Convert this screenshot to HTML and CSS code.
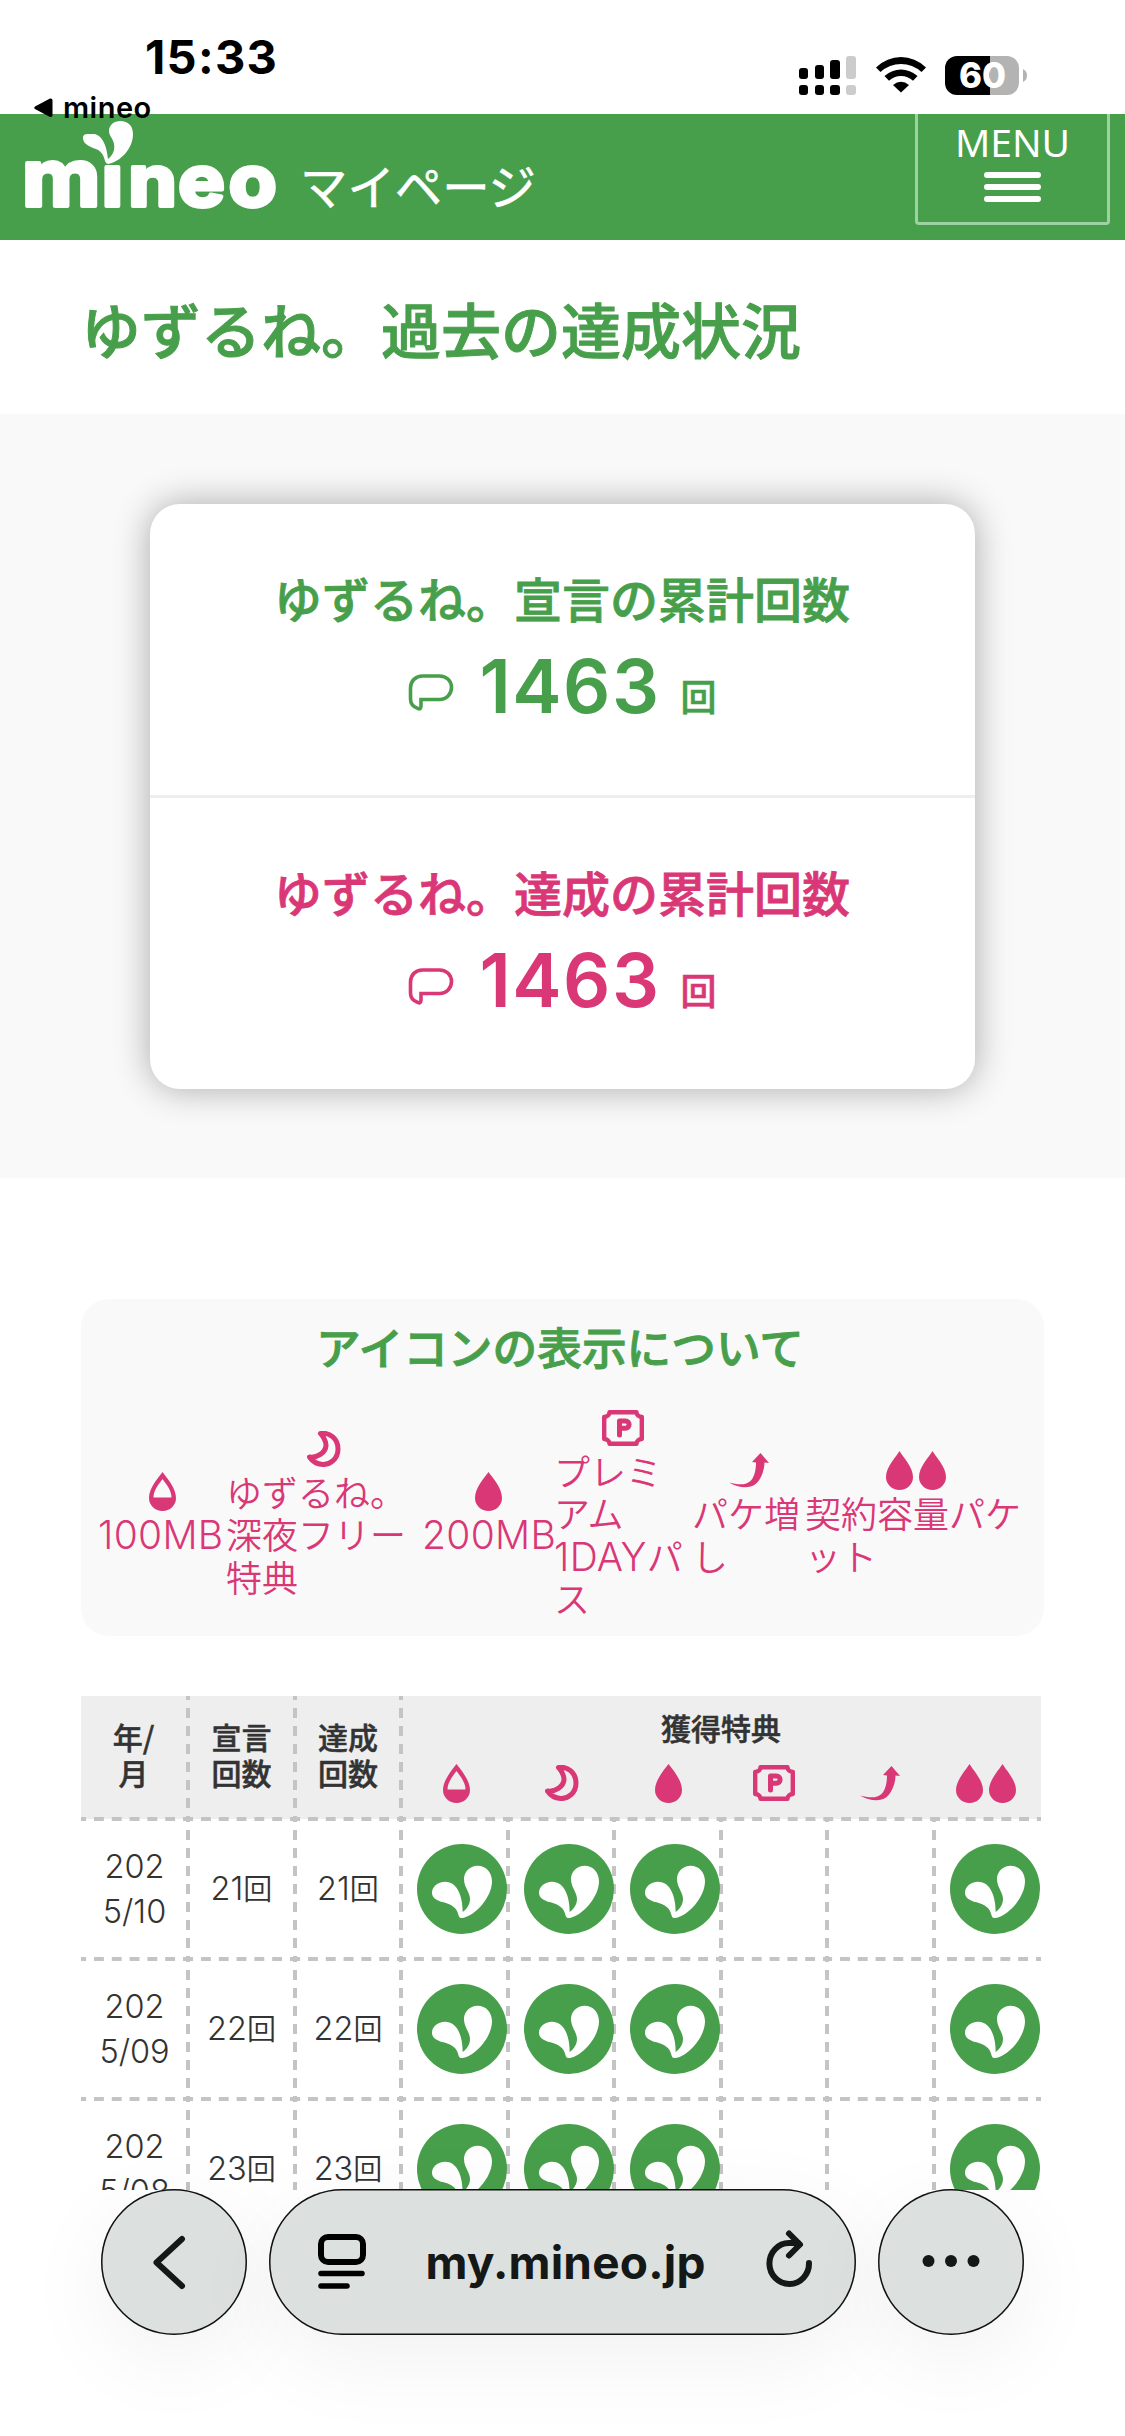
FILE: index.html
```html
<!DOCTYPE html>
<html lang="ja">
<head>
<meta charset="utf-8">
<title>ゆずるね。過去の達成状況</title>
<link rel="stylesheet" href="styles.css">
</head>
<body>
<svg class="defs" aria-hidden="true">
  <symbol id="drop" viewBox="0 0 27 39"><path d="M13.5 0C18 6 27 16 27 26a13.5 13 0 0 1-27 0C0 16 9 6 13.5 0Z" fill="currentColor"/></symbol>
  <symbol id="half" viewBox="0 0 27 39"><path d="M13.5 0C18 6 27 16 27 26a13.5 13 0 0 1-27 0C0 16 9 6 13.5 0ZM13.5 7C10 12 4.5 18 4.5 25.500h18C22.500 18 17 12 13.500 7Z" fill="currentColor" fill-rule="evenodd"/></symbol>
  <symbol id="moon" viewBox="0 0 34 36"><path d="M13.500 2.500C23 1 31 8 31 18S23 34 15.500 33.500C10 33 5.500 30.500 2.500 26C10 27 18.500 22 19 14.500C19.200 9.500 16 5.500 13.500 2.500Z" fill="none" stroke="currentColor" stroke-width="5" stroke-linejoin="round"/></symbol>
  <symbol id="ticket" viewBox="0 0 42 36"><path d="M7.500 2.200H34.500C34.500 5 37 6.800 39.800 7V29C37 29.200 34.500 31 34.500 33.800H7.500C7.500 31 5 29.200 2.200 29V7C5 6.800 7.500 5 7.500 2.200Z" fill="none" stroke="currentColor" stroke-width="4.400" stroke-linejoin="round"/><path d="M17.500 25V11H23.500a3.600 3.600 0 0 1 0 7.200H17.500" fill="none" stroke="currentColor" stroke-width="5" stroke-linecap="round" stroke-linejoin="round"/></symbol>
  <symbol id="rise" viewBox="0 0 40 35"><path d="M0 29.500C9 32 17 32.500 22 27.500C26 23 27 15 27 9.500L23 9L31.500 0L40 10L35.500 9.500C35.500 18 31 28 26 31.500C19 36.500 8 34 0 29.500Z" fill="currentColor"/></symbol>
  <symbol id="twin" viewBox="0 0 60 39"><path d="M13.500 0C17 6 27 16 27 26a13.500 13 0 0 1-27 0C0 16 10 6 13.500 0ZM46.500 0C50 6 60 16 60 26a13.500 13 0 0 1-27 0C33 16 43 6 46.500 0Z" fill="currentColor"/></symbol>
  <symbol id="bubble" viewBox="0 0 45 37"><path d="M14 2H31C38 2 43 7 43 13.500S38 25.500 31 25.500H12.500V32C12.500 34 11.500 35.500 9.500 34.500C5 33 2 30 2 25V14C2 7 7 2 14 2Z" fill="none" stroke="currentColor" stroke-width="3.600"/></symbol>
  <symbol id="badge" viewBox="0 0 270 270"><circle cx="135" cy="135" r="135" fill="#489f4b"/><path d="M125 215C120 192 105 182 80 175C58 169 45 161 45 146C45 128 62 113 84 113C122 113 137 158 137 204C151 194 159 180 159 165C159 145 141 130 141 105C141 82 160 65 182 65C207 65 225 85 225 112C225 160 175 215 138 222C130 223 127 221 125 215Z" fill="#fff"/></symbol>
</svg>

<div class="viewport">
  <div class="status">
    <div class="status-left">
      <div class="clock">15:33</div>
      <div class="back-app"><svg width="19" height="20" viewBox="0 0 19 20"><path d="M1 8.500 16 .5Q18.500 0 18.500 2.500V17Q18.500 19.500 16 19L1 11Q-.5 10 1 8.500Z"/></svg><span>mineo</span></div>
    </div>
    <div class="status-right">
      <svg width="57" height="39" viewBox="0 0 57 39"><rect y="12" width="9" height="11" rx="3"/><rect x="16" y="9" width="9" height="14" rx="3"/><rect x="31" y="4" width="10" height="19" rx="3"/><rect x="47" width="10" height="23" rx="3" fill="#ccc"/><rect y="29" width="9" height="10" rx="3"/><rect x="16" y="29" width="9" height="10" rx="3"/><rect x="31" y="29" width="10" height="10" rx="3"/><rect x="47" y="29" width="10" height="10" rx="3" fill="#ccc"/></svg>
      <svg class="wifi" width="50" height="37" viewBox="0 0 50 37"><path d="M0 11.500Q11 1 25 1T50 11.500L45.500 16Q36.500 8 25 8T4.500 16Z"/><path d="M8.500 20Q16 13.500 25 13.500T41.500 20L37 24.800Q32 20 25 20T13 24.800Z"/><path d="M17 29Q25 22.500 33 29L25 36.500Z"/></svg>
      <svg class="battery" width="83" height="39" viewBox="0 0 83 39"><defs><clipPath id="cell"><rect width="74" height="39" rx="12"/></clipPath></defs><g clip-path="url(#cell)"><rect width="45" height="39"/><rect x="45" width="29" height="39" fill="#b3b3b3"/></g><path d="M78 13Q82 15 82 19.500T78 26Z" fill="#b3b3b3"/><text x="14" y="32" textLength="47" lengthAdjust="spacingAndGlyphs" class="level">60</text></svg>
    </div>
  </div>

  <header class="header">
    <svg class="logo" width="540" height="126" viewBox="0 0 540 126" role="img" aria-label="mineo マイページ">
      <text transform="scale(1.1 1)" x="20 92.500 116.500 162 208" y="92.500" class="brand"><tspan class="brand-m">m</tspan>ıneo</text>
      <path d="M105 47C103 38 99 36 93 34C86 31 83 28 83 24C83 19 87 20 94 20C103 21 107 34 108 45C113 41 115 36 114 30C113 24 109 22 109 17C109 11 114 7 120.500 7C128 7 133 12 133 20C133 35 120 48 108 50Q106 50 105 47Z" fill="#fff"/>
      <text x="300" y="91" textLength="236" lengthAdjust="spacingAndGlyphs" class="brand-sub">マイページ</text>
    </svg>
    <div class="menu"><span>MENU</span><i></i><i></i><i></i></div>
  </header>

  <h1 class="title">ゆずるね。過去の達成状況</h1>

  <section class="summary">
    <div class="card">
      <div class="total green"><h2>ゆずるね。宣言の累計回数</h2><p><svg width="46" height="37"><use href="#bubble"/></svg><b>1463</b><small>回</small></p></div>
      <div class="total pink"><h2>ゆずるね。達成の累計回数</h2><p><svg width="46" height="37"><use href="#bubble"/></svg><b>1463</b><small>回</small></p></div>
    </div>
  </section>

  <section class="legend">
    <h2>アイコンの表示について</h2>
    <ul>
      <li class="w1"><div class="ico"><svg width="27" height="39"><use href="#half"/></svg></div><span class="latin">100MB</span></li>
      <li class="w2"><div class="ico"><svg width="34" height="36"><use href="#moon"/></svg></div>ゆずるね。<br>深夜フリー<br>特典</li>
      <li class="w3"><div class="ico"><svg width="27" height="39"><use href="#drop"/></svg></div><span class="latin">200MB</span></li>
      <li class="w4"><div class="ico"><svg width="42" height="36"><use href="#ticket"/></svg></div>プレミ<br>アム<br><span class="latin">1DAY</span>パ<br>ス</li>
      <li class="w5"><div class="ico"><svg width="40" height="35"><use href="#rise"/></svg></div>パケ増<br>し</li>
      <li class="w6"><div class="ico"><svg width="60" height="39"><use href="#twin"/></svg></div>契約容量パケ<br>ット</li>
    </ul>
  </section>

  <table class="history">
    <colgroup><col class="c109"><col class="c107"><col class="c106"><col class="c107"><col class="c106"><col class="c107"><col class="c106"><col class="c107"><col class="c105"></colgroup>
    <thead>
      <tr>
        <th>年/<br>月</th><th>宣言<br>回数</th><th>達成<br>回数</th>
        <th colspan="6" class="perks">獲得特典
          <div class="perk-icons"><span><svg width="27" height="39"><use href="#half"/></svg></span><span><svg width="34" height="36"><use href="#moon"/></svg></span><span><svg width="27" height="39"><use href="#drop"/></svg></span><span><svg width="42" height="36"><use href="#ticket"/></svg></span><span><svg width="40" height="35"><use href="#rise"/></svg></span><span><svg width="60" height="39"><use href="#twin"/></svg></span></div>
        </th>
      </tr>
    </thead>
    <tbody>
      <tr><td>202<br>5/10</td><td>21<small>回</small></td><td>21<small>回</small></td><td><svg class="badge"><use href="#badge"/></svg></td><td><svg class="badge"><use href="#badge"/></svg></td><td><svg class="badge"><use href="#badge"/></svg></td><td></td><td></td><td><svg class="badge"><use href="#badge"/></svg></td></tr>
      <tr><td>202<br>5/09</td><td>22<small>回</small></td><td>22<small>回</small></td><td><svg class="badge"><use href="#badge"/></svg></td><td><svg class="badge"><use href="#badge"/></svg></td><td><svg class="badge"><use href="#badge"/></svg></td><td></td><td></td><td><svg class="badge"><use href="#badge"/></svg></td></tr>
      <tr><td>202<br>5/08</td><td>23<small>回</small></td><td>23<small>回</small></td><td><svg class="badge"><use href="#badge"/></svg></td><td><svg class="badge"><use href="#badge"/></svg></td><td><svg class="badge"><use href="#badge"/></svg></td><td></td><td></td><td><svg class="badge"><use href="#badge"/></svg></td></tr>
    </tbody>
  </table>
</div>

<nav class="toolbar">
  <div class="round"><svg width="146" height="146" viewBox="0 0 146 146"><path d="M81 50 55.500 73.500 81 97" class="line"/></svg></div>
  <div class="address">
    <svg width="50" height="58" viewBox="0 0 50 58"><rect x="4" y="4" width="42" height="25" rx="7" fill="none" stroke="#000" stroke-width="6"/><path d="M4 40.500H45M4 53H30" stroke="#000" stroke-width="5.500" stroke-linecap="round"/></svg>
    <span>my.mineo.jp</span>
    <svg class="reload" width="50" height="60" viewBox="0 0 50 60"><path d="M45 35A19.800 20.500 0 1 1 25 15H34" class="line"/><path d="M25 5.500 36 16.500 25 27.500" class="line"/></svg>
  </div>
  <div class="round"><svg width="146" height="146" viewBox="0 0 146 146"><circle cx="50.500" cy="72" r="6"/><circle cx="73" cy="72" r="6"/><circle cx="95.500" cy="72" r="6"/></svg></div>
</nav>
</body>
</html>
```
FILE: styles.css
```css
* { box-sizing: border-box; }

body {
  margin: 0;
  width: 1125px;
  height: 2436px;
  overflow: hidden;
  background: #fff;
  color: #333;
  font-family: "Noto Sans CJK JP", sans-serif;
}

h1, h2, p, ul { margin: 0; padding: 0; }
svg { display: block; flex: none; }
.defs { position: absolute; width: 0; height: 0; }

.viewport { height: 2190px; overflow: hidden; }

/* status bar */
.status {
  position: relative;
  z-index: 1;
  height: 114px;
  display: flex;
  justify-content: space-between;
  font-family: Inter, sans-serif;
  color: #000;
}
.status-left { padding: 33px 0 0 34px; }
.clock { padding-left: 111px; font-size: 47px; line-height: 47px; font-weight: 700; letter-spacing: 1.3px; }
.back-app { display: flex; align-items: center; gap: 10px; height: 36px; margin-top: 10px; font-size: 29px; line-height: 36px; font-weight: 600; letter-spacing: 0.5px; }
.back-app svg { margin-top: -1px; }
.back-app span { margin-top: -1px; }
.status-right { display: flex; align-items: flex-start; padding: 56px 97px 0 0; }
.wifi { margin-left: 20px; }
.battery { margin-left: 19px; }
.level { font: 800 35px Inter, sans-serif; fill: #fff; }

/* green header */
.header {
  height: 126px;
  padding-right: 15px;
  display: flex;
  justify-content: space-between;
  align-items: flex-start;
  background: #489f4b;
  color: #fff;
}
.brand { font: 700 71px Inter, sans-serif; fill: #fff; stroke: #fff; stroke-width: 4px; stroke-linejoin: round; }
.brand-m { font-size: 78px; }
.brand-sub { font: 400 48px "Noto Sans CJK JP", sans-serif; fill: #fff; stroke: #fff; stroke-width: 0.6px; }
.menu {
  width: 195px;
  height: 111px;
  border: 3px solid #a0d1a2;
  border-top: 0;
  border-radius: 0 0 4px 4px;
  display: flex;
  flex-direction: column;
  align-items: center;
  gap: 6px;
  font: 400 39px/56px "Noto Sans", sans-serif;
}
.menu i { width: 57px; height: 6px; border-radius: 3px; background: #fff; }
.menu span { height: 52px; }

.title {
  height: 174px;
  padding-left: 81px;
  font-size: 60px;
  line-height: 176px;
  font-weight: 500;
  color: #489f4b;
  -webkit-text-stroke: 1px;
}

/* totals */
.summary { height: 764px; padding: 90px 150px; background: #f9f9f9; }
.card { height: 585px; border-radius: 30px; background: #fff; box-shadow: 0 0 36px rgba(0, 0, 0, .32); }
.total { height: 294px; padding-top: 58px; text-align: center; }
.green { color: #489f4b; border-bottom: 3px solid #eee; }
.pink { color: #da3777; }
.total h2 { font-size: 48px; line-height: 70px; font-weight: 500; -webkit-text-stroke: 0.8px; margin-left: -1px; }
.total p { display: flex; justify-content: center; align-items: flex-end; height: 81px; }
.total p svg { margin-bottom: 2px; }
.total b { margin: 0 20px 0 25px; font: 600 74px/54px Inter, sans-serif; letter-spacing: 1.500px; }
.total small { font-size: 36px; line-height: 36px; font-weight: 500; -webkit-text-stroke: 0.6px; }

/* icon legend */
.legend {
  margin: 121px 81px 60px;
  height: 337px;
  padding-top: 14px;
  border-radius: 28px;
  background: #f9f9f9;
}
.legend h2 { margin-left: -5px; font-size: 44.700px; line-height: 66px; font-weight: 500; text-align: center; color: #489f4b; -webkit-text-stroke: 0.9px; }
.legend ul { display: flex; align-items: center; height: 267px; padding-left: 17px; list-style: none; color: #da3777; }
.legend li { flex: none; font-size: 36px; line-height: 42.400px; font-weight: 350; white-space: nowrap; }
.legend .latin { font: 300 39px/30px Inter, sans-serif; letter-spacing: 0.3px; }
.ico { height: 42px; display: flex; justify-content: center; align-items: center; }
.legend .w1 { width: 128px; }
.w2 { width: 196px; }
.w3 { width: 132px; }
.w4 { width: 138px; }
.w5 { width: 113px; }
.w6 { width: 222px; }

/* monthly history */
.history { width: 960px; margin-left: 81px; table-layout: fixed; border-collapse: separate; border-spacing: 0; }
.c109 { width: 109px; }
.c107 { width: 107px; }
.c106 { width: 106px; }
.c105 { width: 105px; }
.history th, .history td {
  --dash: #c4c4c4;
  padding: 0 4px 4px 0;
  text-align: center;
  background-repeat: repeat-y, repeat-x;
  background-image:
    linear-gradient(var(--dash) 10px, transparent 10px),
    linear-gradient(90deg, var(--dash) 9.500px, transparent 9.500px);
  background-size: 4px 18px, 17.800px 4px;
  background-position: right 9px, 11px 100%;
}
.history th {
  height: 125px;
  padding-bottom: 10px;
  font-size: 30px;
  line-height: 36px;
  font-weight: 500;
  -webkit-text-stroke: 0.5px;
  background-repeat: repeat-y, repeat-x, no-repeat;
  background-image:
    linear-gradient(var(--dash) 10px, transparent 10px),
    linear-gradient(90deg, var(--dash) 9.500px, transparent 9.500px),
    linear-gradient(#eee, #eee);
  background-size: 4px 18px, 17.800px 4px, 100% 123px;
  background-position: right 12px, 11px 100%, 0 0;
}
.history th:first-child { background-position: right 12px, 13px 100%, 0 0; }
.history td:first-child { padding-left: 2px; background-position: right 9px, 13px 100%; }
.history td:last-child { background-size: 0 0, 17.800px 4px; }
.history th.perks { vertical-align: top; padding: 13px 2px 0 0; background-size: 0 0, 17.800px 4px, 100% 123px; }
.perk-icons { display: grid; grid-template-columns: repeat(6, 1fr); margin-top: 17px; height: 42px; color: #da3777; }
.perk-icons span { display: flex; align-items: center; justify-content: center; }
.history td {
  height: 140px;
  font: 300 32.500px/45px Inter, "Noto Sans CJK JP", sans-serif;
}
.history td small { font-size: 29px; font-weight: 350; }
.badge { width: 90px; height: 90px; margin: 0 0 0 14px; }

/* browser toolbar */
.toolbar {
  position: relative;
  height: 247px;
  margin-top: -1px;
  padding: 0 101px;
  display: flex;
  align-items: flex-start;
  gap: 22px;
}
.round, .address {
  height: 146px;
  border-radius: 73px;
  background: #dce1df;
  box-shadow: inset 0 0 0 1.500px #111, 0 24px 90px rgba(0, 0, 0, .06);
}
.round { width: 146px; fill: #141816; }
.address { width: 587px; display: flex; align-items: center; padding: 0 42px 0 48px; justify-content: space-between; }
.address span { font: 700 46px/60px Inter, sans-serif; letter-spacing: 0.2px; color: #141816; }
.address .reload { margin: -8px 0 0 0; }
.line { fill: none; stroke: #141816; stroke-width: 6px; stroke-linecap: round; stroke-linejoin: round; }
```
